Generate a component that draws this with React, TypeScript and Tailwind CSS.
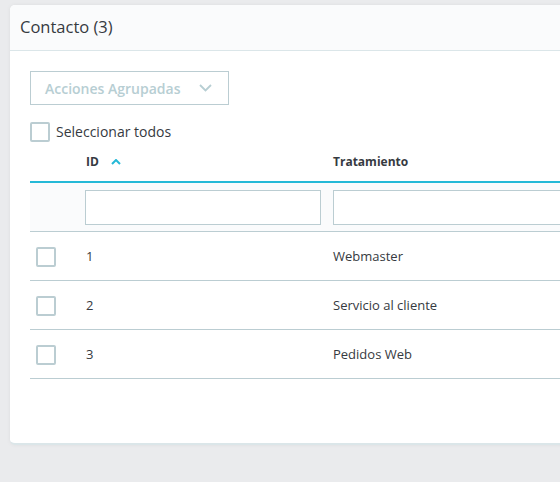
import React from 'react';

const rows = [
  { id: 1, name: 'Webmaster' },
  { id: 2, name: 'Servicio al cliente' },
  { id: 3, name: 'Pedidos Web' },
];

const Box = () => (
  <span className="block w-5 h-5 rounded-[2px] border-2 border-[#bbcdd2] bg-white" />
);

export default function App() {
  return (
    <div
      className="w-[560px] h-[482px] overflow-hidden bg-[#eaebed] pt-[5px] pl-[10px]"
      style={{ fontFamily: '"Open Sans", "Liberation Sans", sans-serif' }}
    >
      <div className="w-[600px] h-[440px] bg-white rounded-[5px] shadow-[0_0_4px_0_rgba(0,0,0,0.06)] border-b-2 border-[#dbe6e9] overflow-hidden">
        <div className="h-[46px] bg-[#fafbfc] border-b border-[#dbe6e9] px-[10px] flex items-center">
          <h2 className="text-[16.5px] text-[#363a41] leading-none">Contacto (3)</h2>
        </div>

        <div className="px-5 pt-5">
          <button className="w-[199px] h-[34px] border border-[#bbcdd2] flex items-center pl-[14px] text-[14px] text-[#b7ced3] font-semibold">
            Acciones Agrupadas
            <svg className="ml-[19px]" width="13" height="8" viewBox="0 0 13 8" fill="none">
              <path d="M1 1l5.5 5.5L12 1" stroke="#b7ced3" strokeWidth="1.8" />
            </svg>
          </button>

          <label className="mt-4 flex items-center gap-[6px] text-[14px] text-[#363a41]">
            <Box />
            Seleccionar todos
          </label>

          <div className="w-[580px] text-[13px] text-[#363a41]">
            <div className="h-[41px] flex items-center border-b-2 border-[#25b9d7]">
              <div className="w-[56px]" />
              <div className="w-[247px] flex items-center font-bold text-[12px] gap-[12px]">
                ID
                <svg width="10" height="6" viewBox="0 0 10 6" fill="none">
                  <path d="M1 5l4-4 4 4" stroke="#25b9d7" strokeWidth="2" />
                </svg>
              </div>
              <div className="font-bold text-[12px]">Tratamiento</div>
            </div>

            <div className="h-[49px] bg-[#fafbfc] border-b border-[#bbcdd2] flex items-center">
              <div className="w-[55px]" />
              <input className="w-[236px] h-[35px] border border-[#bbcdd2] bg-white outline-none" />
              <input className="ml-[12px] w-[260px] h-[35px] border border-[#bbcdd2] bg-white outline-none" />
            </div>

            {rows.map((r) => (
              <div key={r.id} className="h-[49px] border-b border-[#bbcdd2] flex items-center pt-[1px]">
                <div className="w-[56px] pl-[6px]">
                  <Box />
                </div>
                <div className="w-[247px]">{r.id}</div>
                <div>{r.name}</div>
              </div>
            ))}
          </div>
        </div>
      </div>
    </div>
  );
}
